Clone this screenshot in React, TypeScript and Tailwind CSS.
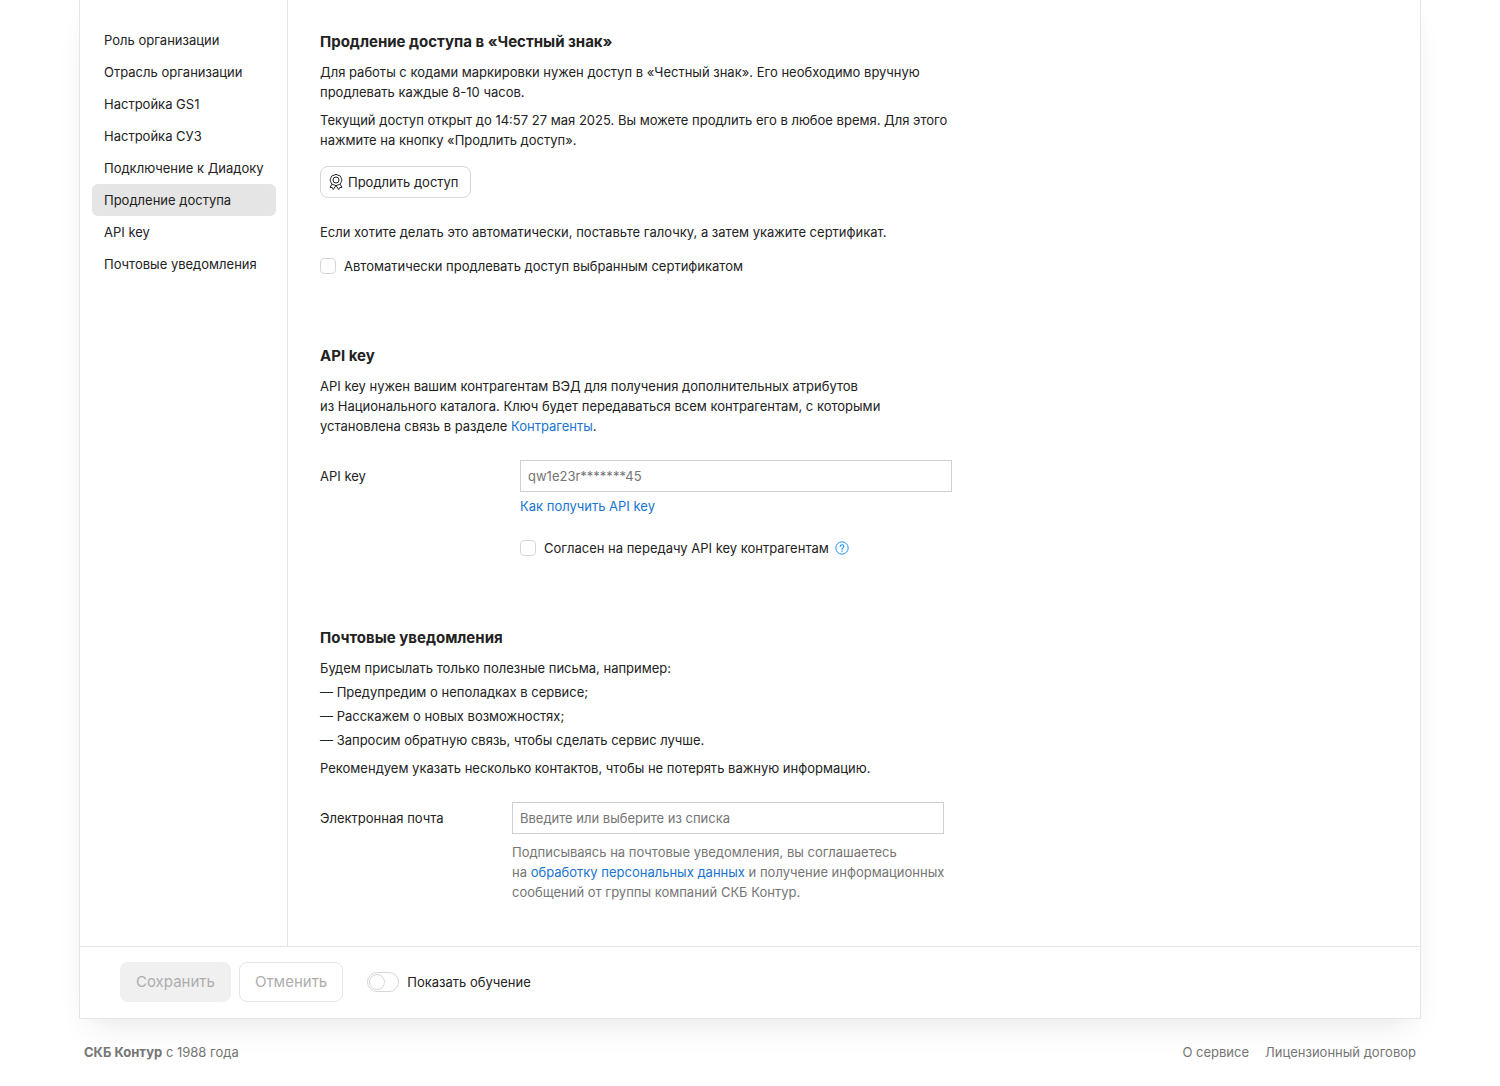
import { useState } from 'react';
import type { ReactNode } from 'react';

const NAV_ITEMS = [
    'Роль организации',
    'Отрасль организации',
    'Настройка GS1',
    'Настройка СУЗ',
    'Подключение к Диадоку',
    'Продление доступа',
    'API key',
    'Почтовые уведомления',
];

const MAIL_TOPICS = [
    'Предупредим о неполадках в сервисе;',
    'Расскажем о новых возможностях;',
    'Запросим обратную связь, чтобы сделать сервис лучше.',
];

function CertificateIcon() {
    return (
        <svg width="16" height="16" viewBox="0 0 16 16" fill="none" stroke="currentColor" strokeWidth="1" strokeLinejoin="round" aria-hidden="true">
            <path d="M6.6 1a2 2 0 0 1 2.8 0l1.700.5a2 2 0 0 1 1.800 1.800l.6 1.500a2 2 0 0 1 0 2.400l-.6 1.500a2 2 0 0 1-1.800 1.800l-1.700.6a2 2 0 0 1-2.800 0l-1.700-.6a2 2 0 0 1-1.800-1.800l-.6-1.500a2 2 0 0 1 0-2.400l.6-1.500a2 2 0 0 1 1.800-1.800z" />
            <circle cx="8" cy="6" r="3" />
            <path d="M4 10.200L2 13.400l2.200.1 1.100 2L8 11.500l2.700 4 1.100-2 2.200-.1-2-3.200" />
        </svg>
    );
}

function HelpIcon() {
    return (
        <svg width="14" height="14" viewBox="0 0 14 14" fill="none" stroke="currentColor" aria-hidden="true">
            <circle cx="7" cy="7" r="6.2" strokeWidth="1" />
            <path d="M5.2 5.5a1.8 1.8 0 1 1 2.7 1.6c-.6.35-.9.7-.9 1.3" strokeWidth="1.1" strokeLinecap="round" />
            <circle cx="7" cy="10.2" r=".7" fill="currentColor" stroke="none" />
        </svg>
    );
}

interface CheckboxProps {
    children: ReactNode;
}

function Checkbox({ children }: CheckboxProps) {
    return (
        <label className="flex items-center gap-2 cursor-pointer">
            <input
                type="checkbox"
                className="appearance-none size-4 shrink-0 rounded border border-[#d6d6d6] bg-white checked:bg-[#1d85d0]"
            />
            <span>{children}</span>
        </label>
    );
}

function Section({ title, children }: { title: string; children: ReactNode }) {
    return (
        <section>
            <h2 className="mb-2 text-[15px] leading-6 font-bold">{title}</h2>
            {children}
        </section>
    );
}

export default function App() {
    const [active, setActive] = useState('Продление доступа');

    return (
        <div className="bg-white px-[79px] font-['Inter','Liberation_Sans',sans-serif] text-[13px] leading-5 text-[#222]">
            <div className="border border-t-0 border-[#e5e5e5] bg-white shadow-[0_16px_32px_-12px_rgba(0,0,0,0.1),0_0_24px_rgba(0,0,0,0.01)]">
                <div className="flex">
                    <nav className="w-52 shrink-0 border-r border-[#e5e5e5] px-3 pt-6 pr-[11px]">
                        {NAV_ITEMS.map(item => (
                            <a
                                key={item}
                                href="#"
                                onClick={() => setActive(item)}
                                className={`block px-3 py-1.5 rounded-md whitespace-nowrap ${item === active ? 'bg-[#e5e5e5]' : ''}`}
                            >
                                {item}
                            </a>
                        ))}
                    </nav>

                    <main className="flex-1 flex flex-col gap-[68px] pl-8 pt-[30px] pb-11">
                        <Section title="Продление доступа в «Честный знак»">
                            <p>
                                Для работы с кодами маркировки нужен доступ в «Честный знак». Его необходимо вручную<br />
                                продлевать каждые 8-10 часов.
                            </p>
                            <p className="mt-2">
                                Текущий доступ открыт до 14:57 27 мая 2025. Вы можете продлить его в любое время. Для этого<br />
                                нажмите на кнопку «Продлить доступ».
                            </p>
                            <button className="mt-4 mb-6 flex h-8 items-center gap-1 rounded-lg border border-[#d6d6d6] px-[7px] pr-[11px]">
                                <CertificateIcon />
                                Продлить доступ
                            </button>
                            <p className="mb-[14px]">Если хотите делать это автоматически, поставьте галочку, а затем укажите сертификат.</p>
                            <Checkbox>Автоматически продлевать доступ выбранным сертификатом</Checkbox>
                        </Section>

                        <Section title="API key">
                            <p>
                                API key нужен вашим контрагентам ВЭД для получения дополнительных атрибутов<br />
                                из Национального каталога. Ключ будет передаваться всем контрагентам, с которыми<br />
                                установлена связь в разделе <a href="#" className="text-[#1874cf]">Контрагенты</a>.
                            </p>
                            <div className="mt-6 flex">
                                <label htmlFor="api-key" className="w-[200px] pt-1.5">API key</label>
                                <div className="w-[432px]">
                                    <input
                                        id="api-key"
                                        placeholder="qw1e23r*******45"
                                        className="block h-8 w-full border border-[#d0d0d0] px-[7px] placeholder:text-[#757575]"
                                    />
                                    <a href="#" className="mt-1 block text-[#1874cf]">Как получить API key</a>
                                    <div className="mt-[22px] flex items-center gap-1.5">
                                        <Checkbox>Согласен на передачу API key контрагентам</Checkbox>
                                        <button aria-label="Справка" className="text-[#2291ff]"><HelpIcon /></button>
                                    </div>
                                </div>
                            </div>
                        </Section>

                        <Section title="Почтовые уведомления">
                            <p>Будем присылать только полезные письма, например:</p>
                            <ul className="mt-0.5 mb-1.5 leading-6">
                                {MAIL_TOPICS.map(topic => <li key={topic}>— {topic}</li>)}
                            </ul>
                            <p>Рекомендуем указать несколько контактов, чтобы не потерять важную информацию.</p>
                            <div className="mt-6 flex">
                                <label htmlFor="email" className="w-48 pt-1.5">Электронная почта</label>
                                <div className="w-[432px]">
                                    <input
                                        id="email"
                                        type="email"
                                        placeholder="Введите или выберите из списка"
                                        className="block h-8 w-full border border-[#d0d0d0] px-[7px] placeholder:text-[#757575]"
                                    />
                                    <p className="mt-2 whitespace-nowrap text-[#757575]">
                                        Подписываясь на почтовые уведомления, вы соглашаетесь<br />
                                        на <a href="#" className="text-[#1874cf]">обработку персональных данных</a> и получение информационных<br />
                                        сообщений от группы компаний СКБ Контур.
                                    </p>
                                </div>
                            </div>
                        </Section>
                    </main>
                </div>

                <div className="flex items-center gap-2 border-t border-[#e5e5e5] px-10 pt-[15px] pb-4">
                    <button disabled className="h-10 rounded-lg bg-[#f0f0f0] px-4 text-[15px] text-[#adadad]">Сохранить</button>
                    <button disabled className="h-10 rounded-lg border border-[#e5e5e5] px-[15px] text-[15px] text-[#adadad]">Отменить</button>
                    <label className="ml-4 flex cursor-pointer items-center gap-2">
                        <input
                            type="checkbox"
                            role="switch"
                            className="h-5 w-8 appearance-none rounded-full border border-[#d6d6d6] p-px before:block before:size-4 before:rounded-full before:border before:border-[#d6d6d6] checked:before:ml-auto"
                        />
                        Показать обучение
                    </label>
                </div>
            </div>

            <footer className="flex justify-between px-[5px] pt-[23px] pb-6 text-[#757575]">
                <span><b>СКБ Контур</b> с 1988 года</span>
                <div className="flex gap-4">
                    <a href="#">О сервисе</a>
                    <a href="#">Лицензионный договор</a>
                </div>
            </footer>
        </div>
    );
}
